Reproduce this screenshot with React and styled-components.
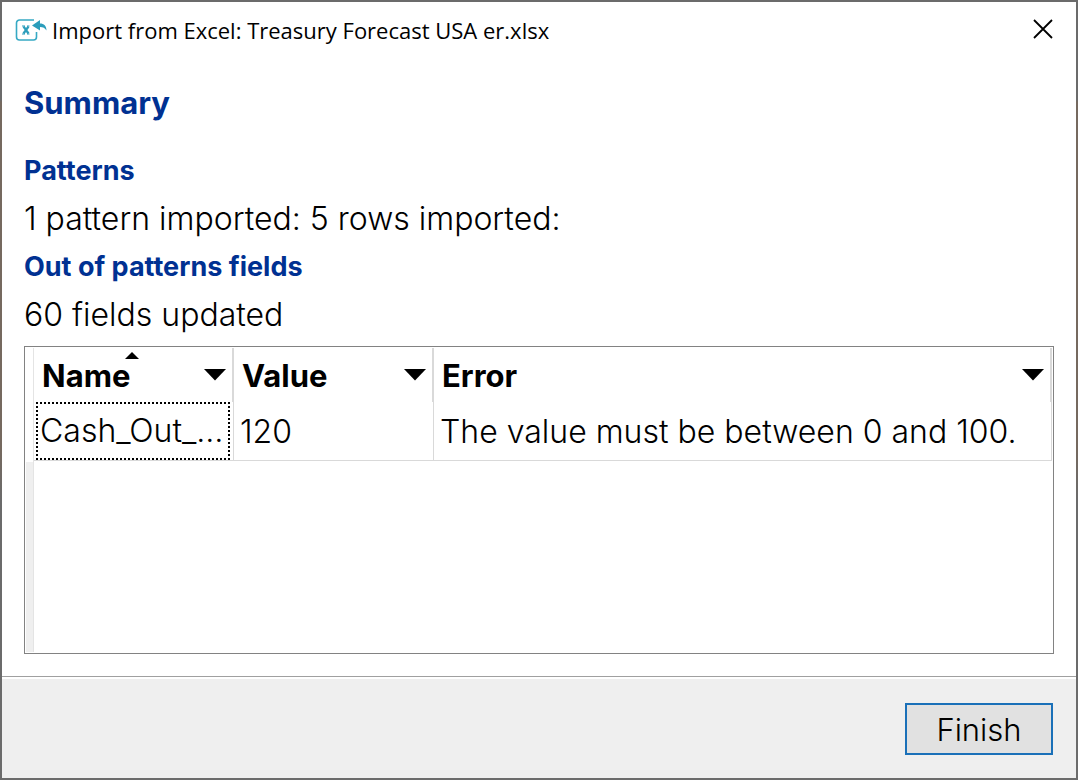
import React from 'react';
import styled, {createGlobalStyle} from 'styled-components';

const GlobalStyle = createGlobalStyle`
  * {
    box-sizing: border-box;
  }
  body {
    margin: 0;
    background: #6b6b6b;
    color: #000000;
    font-family: Inter, "Open Sans", sans-serif;
  }
  h1, h2, h3, p {
    margin: 0;
  }
`;

const Backdrop = styled.div`
  display: flex;
  min-height: 100vh;
  padding: 2px;
  background: linear-gradient(#6b6b6b 100px, #75695f 102px, #75695f 450px, #6b6b6b 500px);
`;

const Dialog = styled.main`
  flex: 1;
  min-width: 0;
  display: flex;
  flex-direction: column;
  background: #ffffff;
`;

const TitleBar = styled.header`
  display: flex;
  align-items: center;
  height: 56px;
  padding: 0 15px 0 12px;
`;

const Title = styled.h1`
  flex: 1;
  padding-left: 4px;
  font: 400 22px/32px "Open Sans", sans-serif;
`;

const CloseButton = styled.button`
  display: flex;
  align-items: center;
  justify-content: center;
  width: 36px;
  height: 36px;
  padding: 0;
  border: 0;
  background: none;
`;

const Content = styled.section`
  flex: 1;
  display: flex;
  flex-direction: column;
  padding: 21px 22px 22px;
`;

const Heading = styled.h2`
  font-weight: 700;
  font-size: 31px;
  line-height: 48px;
  color: #003192;
`;

const SubHeading = styled.h3`
  padding-top: ${({$spaced}) => ($spaced ? '20px' : '0')};
  font-weight: 700;
  font-size: 27px;
  line-height: 48px;
  color: #003192;
`;

const Text = styled.p`
  font-weight: 300;
  font-size: 32px;
  line-height: 48px;
`;

const Grid = styled.div`
  flex: 1;
  display: flex;
  margin-top: 7px;
  padding: 1px;
  border: 1px solid #828282;
`;

const Gutter = styled.div`
  width: 8px;
  padding-top: 114px;
  border-right: 1px solid #e4e4e4;
  background: #efefef content-box;
`;

const Table = styled.table`
  flex: 1;
  align-self: flex-start;
  border-collapse: separate;
  border-spacing: 0;
  table-layout: fixed;
  width: 100%;
`;

const Column = styled.col`
  width: ${({$width}) => $width || 'auto'};
`;

const HeadCell = styled.th`
  position: relative;
  height: 54px;
  padding: 0 6px 0 8px;
  border-right: 2px solid #d9d9d9;
  font-weight: 700;
  font-size: 31px;
  text-align: left;
`;

const HeadContent = styled.div`
  display: flex;
  align-items: center;
  justify-content: space-between;
`;

const SortMark = styled.svg`
  position: absolute;
  top: 4px;
  left: calc(50% - 8px);
`;

const FilterButton = styled.button`
  display: flex;
  padding: 0;
  border: 0;
  background: none;
`;

const Cell = styled.td`
  height: 59px;
  padding: 0 6px;
  border-right: 1px solid #d9d9d9;
  border-bottom: 1px solid #d9d9d9;
  font-weight: 300;
  font-size: 32px;
  white-space: nowrap;
`;

const FocusCell = styled(Cell)`
  padding: 0 3px 0 2px;
`;

const FocusBox = styled.div`
  height: 58px;
  padding-left: 2px;
  border: 2px dotted #000000;
  line-height: 54px;
`;

const Footer = styled.footer`
  display: flex;
  justify-content: flex-end;
  border-top: 1px solid #a0a0a0;
  padding: 26px 23px 23px;
  background: linear-gradient(#ffffff 2px, #efefef 2px);
`;

const FinishButton = styled.button`
  width: 148px;
  height: 52px;
  padding: 0;
  border: 2px solid #1a70b8;
  background: #e1e1e1;
  color: #000000;
  font-family: inherit;
  font-weight: 300;
  font-size: 31px;
`;

const ExcelImportIcon = () => (
  <svg width="34" height="26" viewBox="0 0 34 26" fill="none">
    <path d="M20 3H5.500a3 3 0 0 0-3 3v14a3 3 0 0 0 3 3h14a3 3 0 0 0 3-3v-5" stroke="#36a9c4" strokeWidth="1.600"/>
    <path d="M9.500 9.500l5 7M14.500 9.500l-5 7" stroke="#2b9dbb" strokeWidth="2.200"/>
    <path d="M8 9h3M13 9h2.500M8 17h3M13 17h2.500" stroke="#2b9dbb" strokeWidth="1"/>
    <path d="M18 8.500l8-5.500v3.500c4 0 6.500 2.500 6.500 7-1.500-2.500-3.500-3.500-6.500-3.500v3.500z" fill="#2b9dbb"/>
  </svg>
);

const FilterArrow = ({label}) => (
  <FilterButton aria-label={label}>
    <svg width="22" height="12" viewBox="0 0 22 12">
      <path d="M0 0h22L11 11.500z"/>
    </svg>
  </FilterButton>
);

const columns = [
  {name: 'Name', width: '200px', sorted: true},
  {name: 'Value', width: '200px'},
  {name: 'Error'}
];

const rows = [
  {name: 'Cash_Out_…', value: '120', error: 'The value must be between 0 and 100.'}
];

export default function App() {
  return (
    <Backdrop>
      <GlobalStyle/>
      <Dialog>
        <TitleBar>
          <ExcelImportIcon/>
          <Title>Import from Excel: Treasury Forecast USA er.xlsx</Title>
          <CloseButton aria-label="Close">
            <svg width="22" height="22" viewBox="0 0 22 22" stroke="#000000" strokeWidth="1.800">
              <path d="M2 1l18 18M20 1L2 19"/>
            </svg>
          </CloseButton>
        </TitleBar>
        <Content>
          <Heading>Summary</Heading>
          <SubHeading $spaced>Patterns</SubHeading>
          <Text>1 pattern imported: 5 rows imported:</Text>
          <SubHeading>Out of patterns fields</SubHeading>
          <Text>60 fields updated</Text>
          <Grid>
            <Gutter/>
            <Table>
              <colgroup>
                {columns.map(({name, width}) => <Column key={name} $width={width}/>)}
              </colgroup>
              <thead>
                <tr>
                  {columns.map(({name, sorted}) => (
                    <HeadCell key={name} scope="col" aria-sort={sorted ? 'ascending' : undefined}>
                      {sorted && (
                        <SortMark width="14" height="7" viewBox="0 0 14 7">
                          <path d="M0 7h14L7 0z"/>
                        </SortMark>
                      )}
                      <HeadContent>
                        {name}
                        <FilterArrow label={`Filter ${name}`}/>
                      </HeadContent>
                    </HeadCell>
                  ))}
                </tr>
              </thead>
              <tbody>
                {rows.map(({name, value, error}) => (
                  <tr key={name}>
                    <FocusCell><FocusBox>{name}</FocusBox></FocusCell>
                    <Cell>{value}</Cell>
                    <Cell>{error}</Cell>
                  </tr>
                ))}
              </tbody>
            </Table>
          </Grid>
        </Content>
        <Footer>
          <FinishButton>Finish</FinishButton>
        </Footer>
      </Dialog>
    </Backdrop>
  );
}
